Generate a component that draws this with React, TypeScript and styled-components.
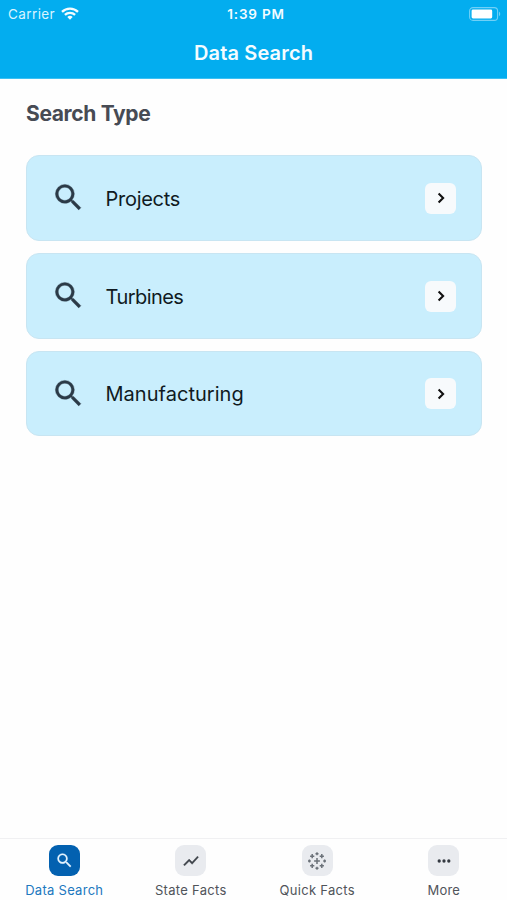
import React from "react";
import styled, { createGlobalStyle } from "styled-components";

const Global = createGlobalStyle`
  * { box-sizing: border-box; }
  body { margin: 0; background: #fff; font-family: Inter, "Liberation Sans", sans-serif; }
`;

const Screen = styled.div`
  display: flex;
  flex-direction: column;
  height: 900px;
  width: 507px;
  overflow: hidden;
  background: #fefefe;
`;

const Header = styled.header`
  height: 79px;
  flex: none;
  background: #03adef;
  border-bottom: 1px solid #3cc0f3;
  color: #f4fcff;
`;

const StatusBar = styled.div`
  display: grid;
  grid-template-columns: 1fr auto 1fr;
  align-items: center;
  height: 27px;
  padding: 0 6px 0 8px;
  line-height: 16px;
`;

const Carrier = styled.div`
  display: flex;
  align-items: center;
  gap: 6px;
  font-size: 13.5px;
  letter-spacing: 0.4px;
  color: #d9f4ff;
`;

const Time = styled.div`
  font-size: 13.5px;
  font-weight: 600;
  letter-spacing: 0.8px;
  padding-left: 3px;
`;

const Battery = styled.svg`
  justify-self: end;
  display: block;
`;

const Title = styled.h1`
  margin: 13px 0 0;
  text-align: center;
  font-size: 20px;
  line-height: 26px;
  font-weight: 600;
  letter-spacing: 0.15px;
`;

const Main = styled.main`
  flex: 1;
  padding: 22px 25px 0 26px;
`;

const SectionTitle = styled.h2`
  margin: 0 0 28px;
  font-size: 21px;
  line-height: 26px;
  font-weight: 700;
  letter-spacing: -0.35px;
  color: #474b54;
`;

const CardList = styled.div`
  display: flex;
  flex-direction: column;
  gap: 12px;
`;

const Card = styled.div`
  display: flex;
  align-items: center;
  height: 85.8px;
  padding: 0 25px 0 24px;
  border: 1px solid #c8e5f2;
  border-radius: 13px;
  background: #c9eefd;
`;

const CardLabel = styled.span<{ $spacing: number }>`
  flex: 1;
  margin-left: 19.5px;
  padding-top: 2px;
  font-size: 20px;
  line-height: 26px;
  letter-spacing: ${(p) => p.$spacing}px;
  color: #101a22;
`;

const Arrow = styled.span`
  display: flex;
  align-items: center;
  justify-content: center;
  width: 31px;
  height: 31px;
  margin-top: 1px;
  border-radius: 6px;
  background: #f7fafc;
`;

const TabBar = styled.nav`
  display: grid;
  grid-template-columns: repeat(4, 1fr);
  flex: none;
  height: 62px;
  padding-left: 1px;
  border-top: 1px solid #f0f0f2;
`;

const Tab = styled.div<{ $active?: boolean }>`
  display: flex;
  flex-direction: column;
  align-items: center;
  padding-top: 6px;
  color: ${(p) => (p.$active ? "#2178be" : "#50545a")};
`;

const TabIcon = styled.span<{ $active?: boolean }>`
  display: flex;
  align-items: center;
  justify-content: center;
  width: 31px;
  height: 31px;
  border-radius: 9px;
  background: ${(p) => (p.$active ? "#0361b0" : "#e9ebef")};
`;

const TabLabel = styled.span<{ $spacing: number }>`
  margin-top: 6px;
  font-size: 13px;
  line-height: 16px;
  letter-spacing: ${(p) => p.$spacing}px;
`;

const SearchIcon = ({ size, color }: { size: number; color: string }) => (
  <svg width={size} height={size} viewBox="0 0 24 24" fill={color} stroke={color} strokeWidth="0.25">
    <path d="M15.5 14h-.79l-.28-.27A6.47 6.47 0 0 0 16 9.5 6.5 6.5 0 1 0 9.5 16c1.61 0 3.09-.59 4.23-1.57l.27.28v.79l5 4.99L20.49 19l-4.99-5zm-6 0C7.01 14 5 11.99 5 9.5S7.01 5 9.5 5 14 7.01 14 9.5 11.99 14 9.5 14z" />
  </svg>
);

const WifiIcon = () => (
  <svg width="18" height="13" viewBox="0 0 18 13" fill="none" stroke="#f4fcff" strokeWidth="2.3">
    <path d="M1 4.8a11.5 11.5 0 0 1 16 0" />
    <path d="M3.9 7.9a7.4 7.4 0 0 1 10.2 0" />
    <path d="M6.3 10a4 4 0 0 1 5.4 0L9 12.7z" fill="#f4fcff" stroke="none" />
  </svg>
);

const TrendIcon = () => (
  <svg width="18" height="18" viewBox="0 0 24 24" fill="#3d4249" stroke="#3d4249" strokeWidth="0.5">
    <path d="m3.5 18.49 6-6.01 4 4L22 6.92l-1.41-1.41-7.09 7.97-4-4L2 16.99z" />
  </svg>
);

const plus = (x: number, y: number, r: number) => `M${x - r} ${y}h${2 * r}M${x} ${y - r}v${2 * r}`;

const ClusterIcon = () => (
  <svg width="20" height="20" viewBox="0 0 20 20" fill="none" stroke="#6b7178">
    <path strokeWidth="1.5" d={plus(10, 10, 2.9)} />
    <path
      strokeWidth="1.5"
      d={[plus(5.2, 5.2, 2.1), plus(14.8, 5.2, 2.1), plus(5.2, 14.8, 2.1), plus(14.8, 14.8, 2.1)].join("")}
    />
    <path
      strokeWidth="1.4"
      d={[plus(10, 2.7, 1.5), plus(10, 17.3, 1.5), plus(2.4, 10, 1.4), plus(17.6, 10, 1.4)].join("")}
    />
  </svg>
);

const DotsIcon = () => (
  <svg width="14" height="4" viewBox="0 0 14 4" fill="#343941">
    <circle cx="2.2" cy="2" r="1.65" />
    <circle cx="7" cy="2" r="1.65" />
    <circle cx="11.8" cy="2" r="1.65" />
  </svg>
);

const searchTypes = [
  { label: "Projects", spacing: -0.27 },
  { label: "Turbines", spacing: -0.55 },
  { label: "Manufacturing", spacing: 0.03 },
];

const tabs = [
  { label: "Data Search", spacing: 0.28, icon: <SearchIcon size={19} color="#e4f3ff" />, active: true },
  { label: "State Facts", spacing: 0.3, icon: <TrendIcon /> },
  { label: "Quick Facts", spacing: 0.3, icon: <ClusterIcon /> },
  { label: "More", spacing: 0.2, icon: <DotsIcon /> },
];

export default function App() {
  return (
    <Screen>
      <Global />
      <Header>
        <StatusBar>
          <Carrier>
            Carrier
            <WifiIcon />
          </Carrier>
          <Time>1:39 PM</Time>
          <Battery width="32" height="14" viewBox="0 0 32 14">
            <rect x="0.6" y="0.6" width="28" height="12.8" rx="3.4" fill="none" stroke="#70d0f7" strokeWidth="1.1" />
            <rect x="2.6" y="2.6" width="20.6" height="8.8" rx="1.4" fill="#fff" />
            <path d="M30 4.8c1.6.6 1.6 3.8 0 4.4z" fill="#70d0f7" />
          </Battery>
        </StatusBar>
        <Title>Data Search</Title>
      </Header>
      <Main>
        <SectionTitle>Search Type</SectionTitle>
        <CardList>
          {searchTypes.map((t) => (
            <Card key={t.label}>
              <SearchIcon size={35} color="#2b3a47" />
              <CardLabel $spacing={t.spacing}>{t.label}</CardLabel>
              <Arrow>
                <svg width="10" height="12" viewBox="0 0 10 12" fill="none" stroke="#111" strokeWidth="2.1">
                  <path d="M2.6 1.5 7.1 6 2.6 10.5" />
                </svg>
              </Arrow>
            </Card>
          ))}
        </CardList>
      </Main>
      <TabBar>
        {tabs.map((t) => (
          <Tab key={t.label} $active={t.active}>
            <TabIcon $active={t.active}>{t.icon}</TabIcon>
            <TabLabel $spacing={t.spacing}>{t.label}</TabLabel>
          </Tab>
        ))}
      </TabBar>
    </Screen>
  );
}
